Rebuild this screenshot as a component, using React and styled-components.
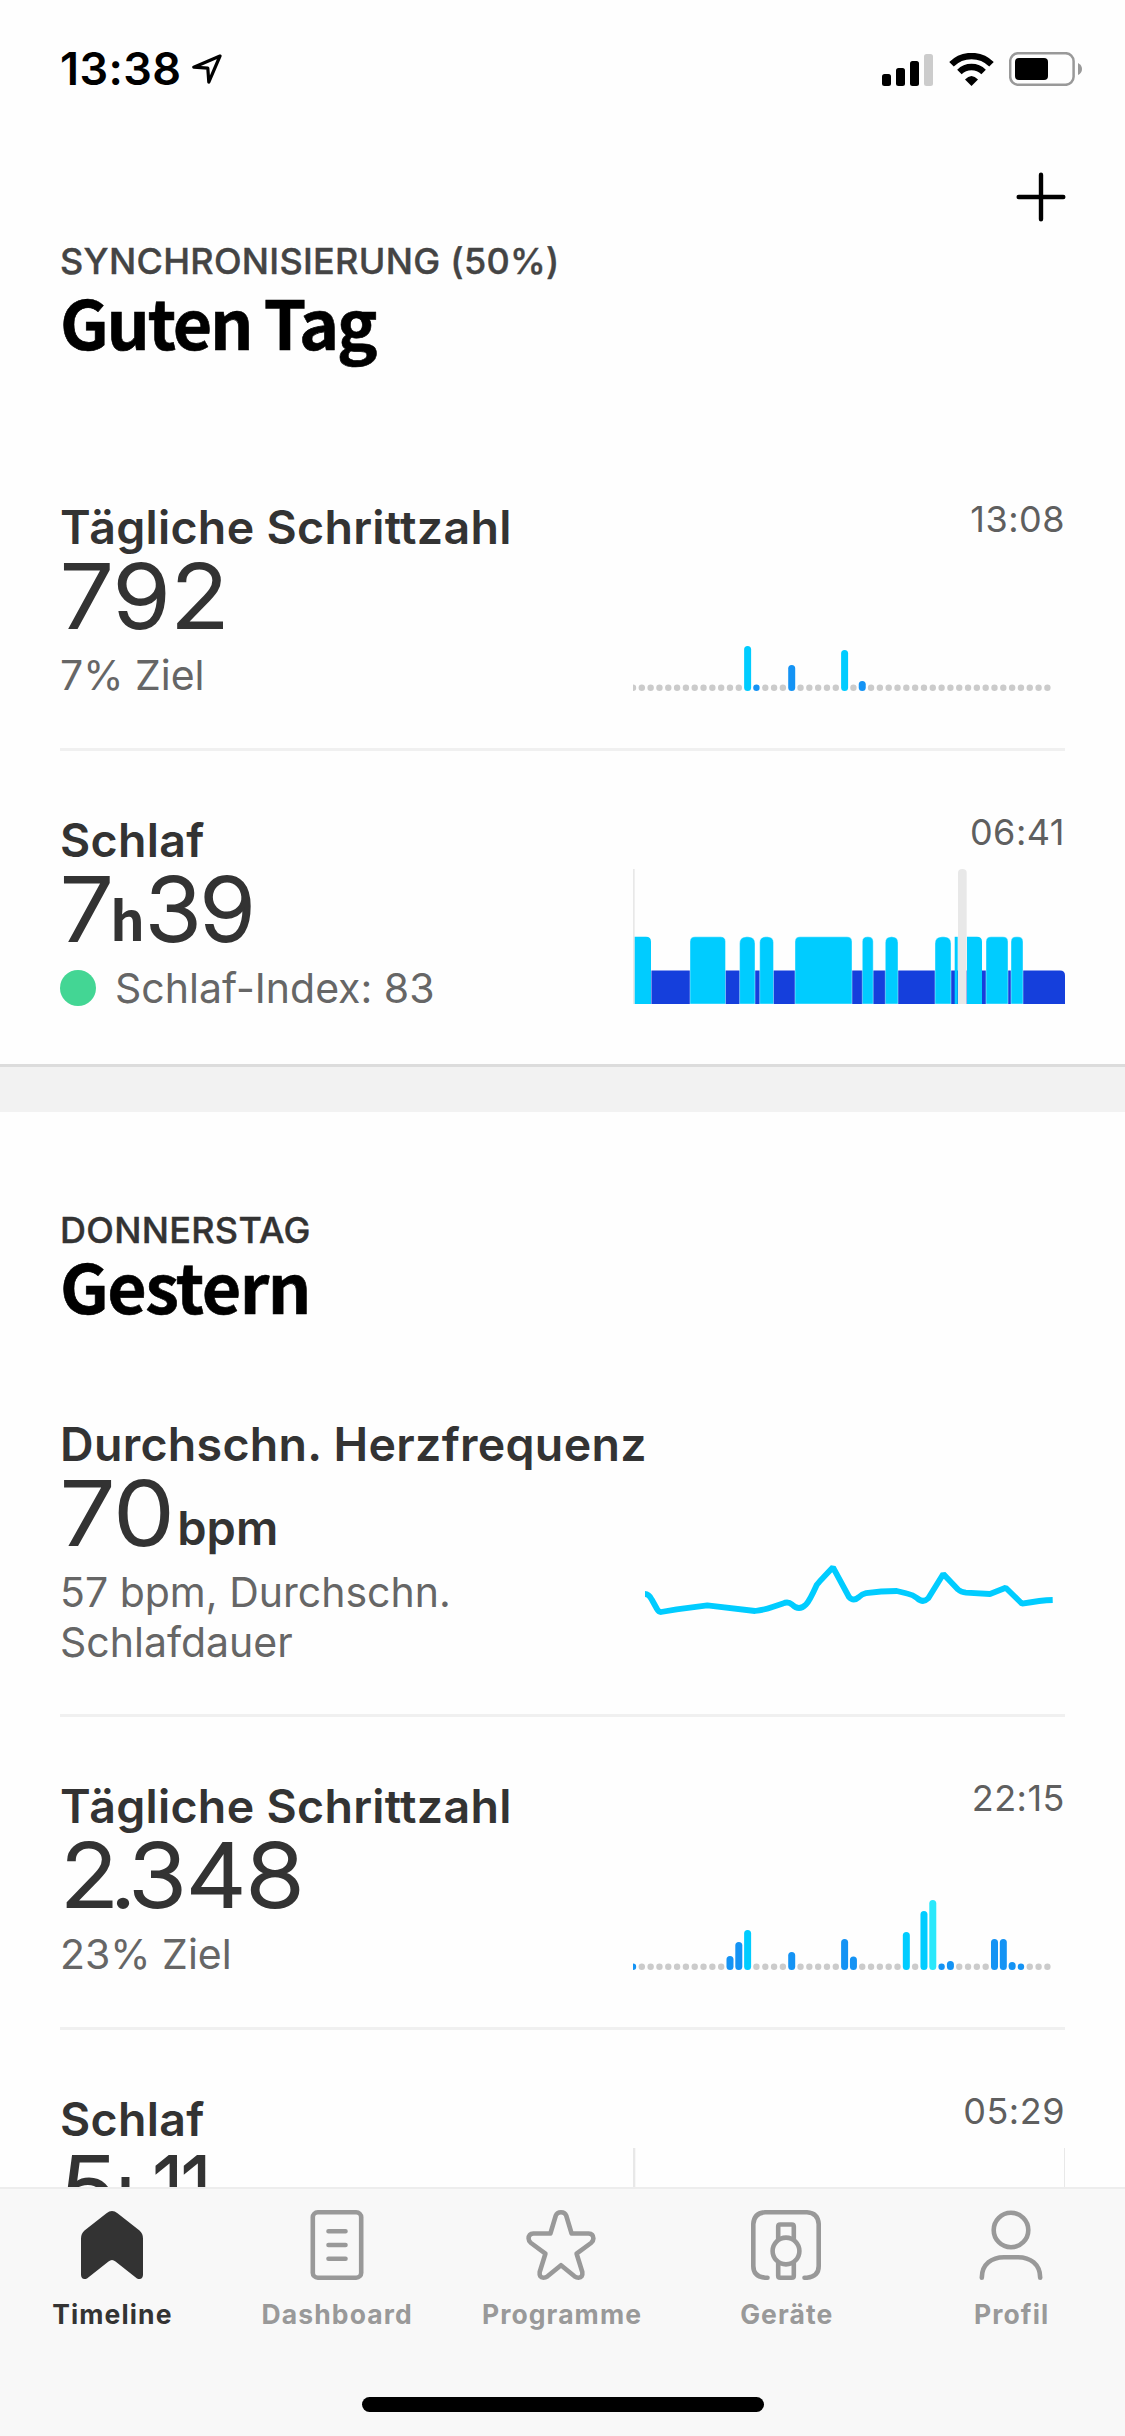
// src/App.jsx
import React from 'react';
import styled, { createGlobalStyle } from 'styled-components';

const GlobalStyle = createGlobalStyle`
  * {
    box-sizing: border-box;
  }

  body {
    margin: 0;
    background: #fefefe;
    font-family: Inter, 'Liberation Sans', sans-serif;
    color: #333;
  }
`;

const Screen = styled.div`
  display: flex;
  flex-direction: column;
  width: 1125px;
  height: 2436px;
  overflow: hidden;
  background: #fefefe;
`;

const StatusBar = styled.header`
  display: flex;
  flex: none;
  align-items: flex-start;
  justify-content: space-between;
  height: 132px;
  padding: 43px 42px 0 60px;
`;

const Clock = styled.div`
  display: flex;
  align-items: center;
  gap: 11px;
  font-size: 45px;
  font-weight: 600;
  line-height: 52px;
  letter-spacing: 0.4px;
  color: #000;
`;

const StatusIcons = styled.div`
  display: flex;
  align-items: center;
  gap: 15.5px;
  padding-top: 9px;
`;

const Toolbar = styled.div`
  display: flex;
  flex: none;
  justify-content: flex-end;
  height: 107px;
  padding: 40px 59px 0 0;
`;

const AddButton = styled.button`
  width: 50px;
  height: 50px;
  padding: 0;
  border: none;
  background: none;
`;

const Feed = styled.main`
  flex: 1;
  min-height: 0;
  overflow: hidden;
`;

const Day = styled.section`
  padding: ${props => (props.$first ? '0 60px' : '96px 60px 0')};
`;

const DayLabel = styled.div`
  font-size: 36px;
  font-weight: 500;
  line-height: 44px;
  letter-spacing: 0.3px;
  color: ${props => (props.$muted ? '#444' : '#333')};
  -webkit-text-stroke: 0.4px currentColor;
`;

const DayTitle = styled.h1`
  height: ${props => props.$height}px;
  margin: ${props => props.$gap}px 0 0;
  font-family: 'Noto Sans CJK JP', 'Open Sans', sans-serif;
  font-size: 68px;
  font-weight: 700;
  line-height: 80px;
  letter-spacing: ${props => props.$tracking}px;
  word-spacing: -1px;
  color: #000;
  -webkit-text-stroke: 0.6px #000;
`;

const DayDivider = styled.div`
  height: 48px;
  border-top: 3px solid #dcdcdc;
  background: #f2f2f2;
`;

const Row = styled.article`
  display: flex;
  height: ${props => props.$height || 313}px;
  border-bottom: ${props => (props.$last ? 'none' : '3px solid #f0f0f0')};
`;

const Info = styled.div`
  flex: 0 0 573px;
  min-width: 0;
  padding-top: 61px;
`;

const Name = styled.h2`
  margin: 0;
  font-size: 46.5px;
  font-weight: 600;
  line-height: 56px;
  letter-spacing: 0.3px;
  white-space: nowrap;
`;

const Value = styled.div`
  display: flex;
  align-items: baseline;
  height: 74px;
  margin-top: 3px;
`;

// the figures are drawn a little wider than the face; the margin makes up for it
const Digits = styled.span`
  margin-right: ${props => props.$stretch || 0}px;
  font-size: 88px;
  font-weight: 300;
  line-height: 76px;
  letter-spacing: ${props => props.$tracking || 0}px;
  transform: scaleX(${props => props.$scale || 1.09});
  transform-origin: left;
  -webkit-text-stroke: 2px #333;
  stroke-linejoin: round;
`;

const Point = styled.span`
  margin: 0 -7px 0 -8px;
`;

const HourUnit = styled.span`
  font-family: 'Noto Sans CJK JP', 'Open Sans', sans-serif;
  font-size: 54px;
  font-weight: 700;
  line-height: 1;
`;

const Unit = styled.span`
  margin-left: 4px;
  font-size: 47px;
  font-weight: 600;
  line-height: 1;
`;

const Note = styled.div`
  display: flex;
  align-items: center;
  width: 480px;
  margin-top: 18px;
  font-size: 41px;
  line-height: 50px;
  color: #666;
`;

const Dot = styled.span`
  width: 36px;
  height: 36px;
  margin-right: 19px;
  border-radius: 50%;
  background: #43d694;
`;

const Aside = styled.div`
  display: flex;
  flex: 1;
  flex-direction: column;
  justify-content: space-between;
  padding: 59px 0 ${props => (props.$last ? 60 : 57)}px;
`;

const Time = styled.time`
  height: 44px;
  font-size: 36px;
  line-height: 44px;
  letter-spacing: 0.5px;
  text-align: right;
  color: #5f5f5f;
`;

const Chart = styled.svg`
  display: block;
  width: 432px;
  height: 135px;
`;

const TabBar = styled.nav`
  display: flex;
  flex: none;
  flex-direction: column;
  align-items: center;
  height: 249px;
  border-top: 2px solid #ededed;
  background: #f8f8f8;
`;

const Tabs = styled.div`
  display: flex;
  width: 100%;
  height: 208px;
  padding: 21px 1px 0 0;
`;

const Tab = styled.a`
  display: flex;
  flex: 1;
  flex-direction: column;
  align-items: center;
  gap: 17px;
  font-size: 26.5px;
  font-weight: 700;
  line-height: 34px;
  letter-spacing: 1.1px;
  color: ${props => (props.$active ? '#333' : '#999')};
`;

const TabIcon = styled.svg`
  width: 70px;
  height: 70px;
  margin-right: 1px;
  fill: none;
  stroke: currentColor;
  stroke-width: 4.6;
  stroke-linecap: round;
  stroke-linejoin: round;
`;

const HomeIndicator = styled.div`
  width: 402px;
  height: 15px;
  border-radius: 8px;
  background: #000;
`;

const CYAN = '#00ccff';
const BLUE = '#1493f4';
const AQUA = '#2ae8fb';
const NAVY = '#153fdc';

// half-hour slots: [height, color], everything else is an empty grey dot
const stepsToday = {
  13: [45, CYAN],
  14: [6.4, BLUE],
  18: [26, BLUE],
  24: [41, CYAN],
  26: [10, BLUE],
};

const stepsYesterday = {
  0: [6.4, BLUE],
  11: [14, BLUE],
  12: [28, BLUE],
  13: [40, CYAN],
  18: [18, BLUE],
  24: [31, BLUE],
  25: [13.5, BLUE],
  31: [38, CYAN],
  33: [59, CYAN],
  34: [70, AQUA],
  35: [6.4, BLUE],
  36: [9, BLUE],
  41: [31, BLUE],
  42: [31, BLUE],
  43: [8, BLUE],
  44: [6.4, BLUE],
};

// light sleep phases: [start, end, radius]
const sleepPhases = [
  [57, 92.5, 5],
  [106.6, 122, 7],
  [126.7, 140.5, 6],
  [162, 219, 5],
  [229.3, 240.2, 5],
  [252.3, 265, 6],
  [302, 318, 7],
  [353, 375, 5],
  [378, 390, 5],
];

const StepsChart = ({ bars }) => (
  <Chart viewBox="0 0 432 135">
    {Array.from({ length: 48 }, (_, i) => {
      const [height, color] = bars[i] || [6.4, '#cbcbcb'];
      const width = height > 7 ? 7 : 6.4;
      return (
        <rect
          key={i}
          x={i * 8.817 - width / 2}
          y={135 - height}
          width={width}
          height={height}
          rx={width / 2}
          fill={color}
        />
      );
    })}
  </Chart>
);

const SleepChart = () => (
  <Chart viewBox="0 0 432 135">
    <path d="M18.4 101.4H427Q432 101.4 432 106.4V135H18.4Z" fill={NAVY} />
    <rect x="0" y="0" width="1.7" height="135" fill="#e8e8e8" />
    <path d="M1.7 67.8H13Q18 67.8 18 72.8V135H1.7Z" fill={CYAN} />
    {sleepPhases.map(([start, end, radius]) => (
      <path
        key={start}
        d={`M${start} 135V${67.8 + radius}Q${start} 67.8 ${start + radius} 67.8H${end - radius}Q${end} 67.8 ${end} ${67.8 + radius}V135Z`}
        fill={CYAN}
        stroke="#fff"
        strokeOpacity="0.4"
      />
    ))}
    <rect x="321.7" y="67.8" width="3" height="67.2" fill={CYAN} />
    <path d="M334 67.8H344Q349 67.8 349 72.8V135H334Z" fill={CYAN} />
    <path d="M325 135V4Q325 0 329.3 0Q333.7 0 333.7 4V135Z" fill="#e8e8e8" />
  </Chart>
);

const HeartChart = () => (
  <Chart viewBox="0 -2 432 135">
    <path
      d="M12 70Q16 70 19 76L24 85Q25.5 88 28 88L43.7 85.3L74.3 81.3L122 87Q133 85.5 138.7 83.3L150 79.5Q155 77 159 80.5Q166 87.5 173 80.5Q176.5 77 183.7 61Q185.5 58.5 200 43.3L216 73Q220.5 78 226 73Q229 70 233 69.2Q248 67 263.7 67L274 69.5Q280 70.7 284 74Q290 79.5 295.3 74.3L310.3 50L325 65.5Q328 68.3 333 68.6L357 70L372.7 63.7L389 79.7Q408 76.3 419.7 76"
      fill="none"
      stroke={CYAN}
      strokeWidth="5.8"
      strokeLinejoin="bevel"
    />
  </Chart>
);

const EmptyNightChart = () => (
  <Chart viewBox="0 0 432 135">
    <rect x="0" y="0" width="2.3" height="135" fill="#e8e8e8" />
    <rect x="431" y="0" width="1" height="135" fill="#e8e8e8" />
  </Chart>
);

const Metric = ({ name, value, note, time, chart, height, last }) => (
  <Row $height={height} $last={last}>
    <Info>
      <Name>{name}</Name>
      <Value>{value}</Value>
      <Note>{note}</Note>
    </Info>
    <Aside $last={last}>
      <Time>{time}</Time>
      {chart}
    </Aside>
  </Row>
);

const tabs = [
  {
    label: 'Timeline',
    active: true,
    icon: (
      <path
        d="M29.5 3.2Q35 -1.2 40.5 3.2L62.5 20.5Q66 23.5 66 28.5V65Q65.5 70.5 60 68.5L38.5 51.5Q35 48.5 31.5 51.5L10 68.5Q4.5 70.5 4 65V28.5Q4 23.5 7.5 20.5Z"
        fill="currentColor"
        stroke="none"
      />
    ),
  },
  {
    label: 'Dashboard',
    icon: (
      <>
        <rect x="10.8" y="2.3" width="48.4" height="65.4" rx="5" />
        <path d="M26.5 21.3H43.5M26.5 35H43.5M26.5 48.7H43.5" />
      </>
    ),
  },
  {
    label: 'Programme',
    icon: (
      <path d="M29.8 5.5Q31 2.3 35 2.3Q39 2.3 40.2 5.5L45.6 23.5H62.5Q67.3 23.8 67.4 28.5Q67.4 31 65 33L50.6 43.7L56.3 62Q57 67.5 52.5 67.7Q50.5 67.7 48.5 66.3L35 55.2L21.5 66.3Q19.5 67.7 17.5 67.7Q13 67.5 13.7 62L19.4 43.7L5 33Q2.6 31 2.6 28.5Q2.7 23.8 7.5 23.5H24.4Z" />
    ),
  },
  {
    label: 'Geräte',
    icon: (
      <>
        <path d="M16.5 67.7H14Q2.3 66.5 2.3 56V14Q3 3 14 2.3H56Q67 3 67.7 14V56Q67.7 66.5 56 67.7H53.5" />
        <circle cx="35" cy="41" r="13.4" />
        <path d="M27.2 29V16.5Q27.2 14.5 29.2 14.5H40.8Q42.8 14.5 42.8 16.5V29M27.2 53V65.7Q27.2 67.7 29.2 67.7H40.8Q42.8 67.7 42.8 65.7V53" />
      </>
    ),
  },
  {
    label: 'Profil',
    icon: (
      <>
        <circle cx="35" cy="20" r="17.3" />
        <path d="M5.8 67.7C5.8 54 16 47.2 28 47.2H42C54 47.2 64.2 54 64.2 67.7" />
      </>
    ),
  },
];

const App = () => (
  <Screen>
    <GlobalStyle />
    <StatusBar>
      <Clock>
        13:38
        <svg width="30" height="30" viewBox="0 0 30 30">
          <path
            d="M28 2L1.8 13.2L15.8 14.2L16.8 28.2Z"
            fill="none"
            stroke="#000"
            strokeWidth="3.2"
            strokeLinejoin="round"
          />
        </svg>
      </Clock>
      <StatusIcons>
        <svg width="51" height="33" viewBox="0 0 51 33">
          <rect x="0" y="21" width="9" height="12" rx="2.5" />
          <rect x="14" y="15" width="9" height="18" rx="2.5" />
          <rect x="28" y="8" width="9" height="25" rx="2.5" />
          <rect x="42" y="1" width="9" height="32" rx="2.5" fill="#ccc" />
        </svg>
        <svg width="45" height="33" viewBox="0 0 45 33">
          <path
            d="M2.5 11.3A28.3 28.3 0 0 1 42.5 11.3M10.4 19A17.3 17.3 0 0 1 34.6 19"
            fill="none"
            stroke="#000"
            strokeWidth="6.4"
          />
          <path d="M22.5 33L16 26.5Q22.5 19.5 29 26.5Z" />
        </svg>
        <svg width="74" height="34" viewBox="0 0 74 34">
          <rect x="1.2" y="1.2" width="63.4" height="31.6" rx="8" fill="none" stroke="#999" strokeWidth="2.5" />
          <rect x="6" y="6" width="33" height="22" rx="4" />
          <path d="M69 11Q73 13 73 17Q73 21 69 23Z" fill="#999" />
        </svg>
      </StatusIcons>
    </StatusBar>

    <Toolbar>
      <AddButton aria-label="Hinzufügen">
        <svg width="50" height="50" viewBox="0 0 50 50">
          <path d="M25 2.7V47.3M2.7 25H47.3" stroke="#000" strokeWidth="4.4" strokeLinecap="round" />
        </svg>
      </AddButton>
    </Toolbar>

    <Feed>
      <Day $first>
        <DayLabel $muted>SYNCHRONISIERUNG (50%)</DayLabel>
        <DayTitle $gap={-2} $height={157} $tracking={-2.2}>Guten Tag</DayTitle>
        <Metric
          name="Tägliche Schrittzahl"
          value={<Digits>792</Digits>}
          note="7% Ziel"
          time="13:08"
          chart={<StepsChart bars={stepsToday} />}
        />
        <Metric
          name="Schlaf"
          value={
            <>
              <Digits $stretch={1}>7</Digits>
              <HourUnit>h</HourUnit>
              <Digits $tracking={-2} $scale={1.06}>39</Digits>
            </>
          }
          note={
            <>
              <Dot />
              Schlaf-Index: 83
            </>
          }
          time="06:41"
          chart={<SleepChart />}
          last
        />
      </Day>

      <DayDivider />

      <Day>
        <DayLabel>DONNERSTAG</DayLabel>
        <DayTitle $gap={-7} $height={110} $tracking={-1.5}>Gestern</DayTitle>
        <Metric
          name="Durchschn. Herzfrequenz"
          value={
            <>
              <Digits $stretch={11} $scale={1.12}>70</Digits>
              <Unit>bpm</Unit>
            </>
          }
          note="57 bpm, Durchschn. Schlafdauer"
          chart={<HeartChart />}
          height={362}
        />
        <Metric
          name="Tägliche Schrittzahl"
          value={
            <Digits $tracking={-0.5}>
              2<Point>.</Point>348
            </Digits>
          }
          note="23% Ziel"
          time="22:15"
          chart={<StepsChart bars={stepsYesterday} />}
        />
        <Metric
          name="Schlaf"
          value={
            <>
              <Digits $stretch={5}>5</Digits>
              <HourUnit>h</HourUnit>
              <Digits $tracking={-4} $scale={0.92}>11</Digits>
            </>
          }
          time="05:29"
          chart={<EmptyNightChart />}
          last
        />
      </Day>
    </Feed>

    <TabBar>
      <Tabs>
        {tabs.map(tab => (
          <Tab key={tab.label} $active={tab.active}>
            <TabIcon viewBox="0 0 70 70">{tab.icon}</TabIcon>
            {tab.label}
          </Tab>
        ))}
      </Tabs>
      <HomeIndicator />
    </TabBar>
  </Screen>
);

export default App;
